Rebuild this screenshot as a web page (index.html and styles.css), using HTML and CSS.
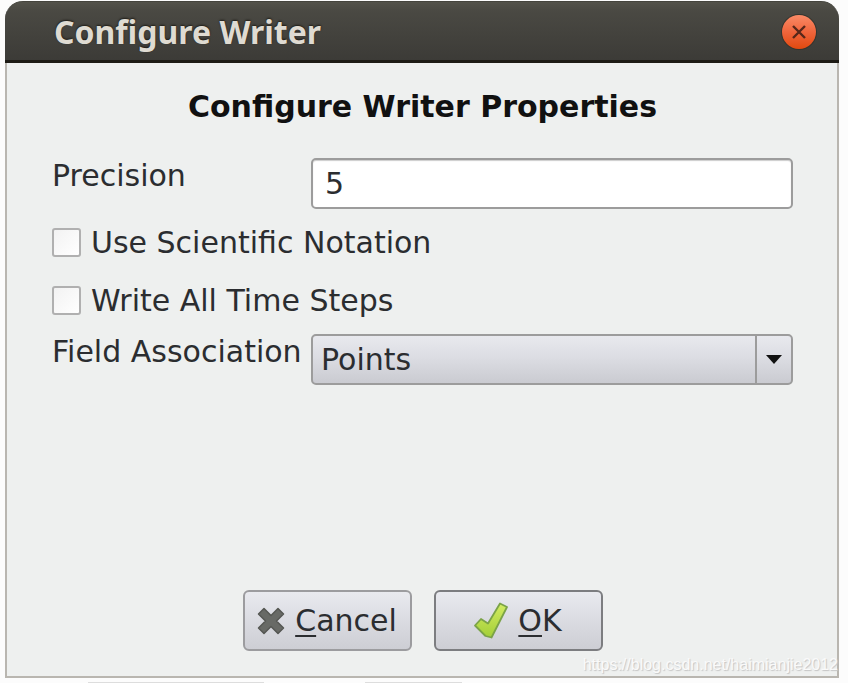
FILE: index.html
```
<!DOCTYPE html>
<html lang="en">

<head>
    <meta charset="utf-8">
    <title>Configure Writer</title>

    <link rel="stylesheet" href="styles.css">
</head>

<body>
    <form class="dialog">
        <div class="titlebar">
            <span class="titlebar-text">Configure Writer</span>
            <button type="button" class="close" aria-label="Close">
                <svg width="36" height="36" viewBox="0 0 36 36" aria-hidden="true">
                    <defs>
                        <linearGradient id="closeFill" x1="0" y1="0" x2="0" y2="1">
                            <stop offset="0" stop-color="#fa8a66"></stop>
                            <stop offset="0.5" stop-color="#f0653c"></stop>
                            <stop offset="1" stop-color="#e2490f"></stop>
                        </linearGradient>
                    </defs>
                    <circle cx="18" cy="18" r="18" fill="#35352f"></circle>
                    <circle cx="18" cy="18" r="17" fill="url(#closeFill)"></circle>
                    <path d="M12 12L24 24M24 12L12 24" stroke="#57271a" stroke-width="2.4"></path>
                </svg>
            </button>
        </div>

        <div class="content">
            <h1 class="heading">Configure Writer Properties</h1>

            <div class="fields">
                <label class="field-label" for="precision">Precision</label>
                <input class="text-input" type="text" id="precision" value="5">

                <div class="checks">
                    <label class="check"><input type="checkbox" class="check-box">Use Scientific Notation</label>
                    <label class="check"><input type="checkbox" class="check-box">Write All Time Steps</label>
                </div>

                <label class="field-label" for="association">Field Association</label>
                <div class="select-wrap">
                    <select class="select" id="association">
                        <option>Points</option>
                        <option>Cells</option>
                    </select>
                    <span class="select-arrow">
                        <svg width="16" height="9" viewBox="0 0 16 9" aria-hidden="true">
                            <path d="M0 0H16L8 9Z" fill="#111"></path>
                        </svg>
                    </span>
                </div>
            </div>

            <div class="buttons">
                <button type="button" class="button">
                    <svg width="28" height="28" viewBox="0 0 28 28" aria-hidden="true">
                        <path d="M7 1.5L14 8.5L21 1.5L26.5 7L19.5 14L26.5 21L21 26.5L14 19.5L7 26.5L1.5 21L8.5 14L1.5 7Z"
                            fill="#686a66" stroke="#555753" stroke-width="1.5" stroke-linejoin="round"></path>
                    </svg>
                    <span><span class="key">C</span>ancel</span>
                </button>
                <button type="submit" class="button button-default">
                    <svg width="34" height="37" viewBox="0 0 34 37" aria-hidden="true">
                        <defs>
                            <linearGradient id="okFill" x1="0" y1="0" x2="0" y2="1">
                                <stop offset="0" stop-color="#d3ec62"></stop>
                                <stop offset="1" stop-color="#a3cf38"></stop>
                            </linearGradient>
                        </defs>
                        <path d="M26 1.5L33 5L17.5 35.5L11.5 34L1 23.5L7 17L14 21.5Z" fill="url(#okFill)"
                            stroke="#7ba348" stroke-width="1.8" stroke-linejoin="round"></path>
                    </svg>
                    <span><span class="key">O</span>K</span>
                </button>
            </div>
        </div>

        <span class="watermark">https://blog.csdn.net/haimianjie2012</span>
    </form>

    <div class="page-lines">
        <span class="line line-long"></span>
        <span class="line line-short"></span>
    </div>
</body>

</html>
```

FILE: styles.css
```
* {
    box-sizing: border-box;
}

body {
    margin: 0;
    padding: 1px 9px 0 5px;
    min-height: 100vh;
    display: flex;
    flex-direction: column;
    background: #fcfcfc;
    font-family: "DejaVu Sans", sans-serif;
    font-size: 30px;
    color: #2b2d30;
}

/* Dialog window */
.dialog {
    position: relative;
    flex: 1;
    display: flex;
    flex-direction: column;
    background: #eef0ef;
    border-radius: 18px 18px 0 0;
}

.titlebar {
    display: flex;
    align-items: center;
    justify-content: space-between;
    height: 62px;
    padding: 2px 22px 0 49px;
    background: linear-gradient(#53524a, #4a4943 15%, #3c3b37);
    border-top: 1px solid #45443d;
    border-bottom: 3px solid #1d1b15;
    border-radius: 18px 18px 0 0;
}

.titlebar-text {
    font-family: "Noto Sans", "Open Sans", sans-serif;
    font-weight: bold;
    font-size: 32px;
    line-height: 44px;
    color: #dfdbd2;
    text-shadow: 0 -1px 2px #1d1b15;
}

.close {
    display: flex;
    padding: 0;
    border: none;
    border-radius: 50%;
    background: none;
}

.content {
    flex: 1;
    display: flex;
    flex-direction: column;
    padding: 26px 44px 25px 45px;
    border: 2px solid #b9b6b0;
    border-top: none;
}

.heading {
    margin: 0 0 33px;
    font-size: 30px;
    line-height: 36px;
    text-align: center;
    color: #111;
}

/* Form fields */
.fields {
    display: grid;
    grid-template-columns: 247px 1fr;
    gap: 19px 12px;
}

.field-label {
    line-height: 36px;
    white-space: nowrap;
}

.text-input,
.select {
    width: 100%;
    height: 51px;
    border: 2px solid #9c9c9c;
    border-radius: 5px;
    font: inherit;
    color: inherit;
}

.text-input {
    padding: 0 12px;
    background: #fff;
    box-shadow: inset 0 1px 1px #ccc;
}

.checks {
    grid-column: 1 / -1;
    display: flex;
    flex-direction: column;
    gap: 29px;
}

.check {
    display: flex;
    align-items: center;
    gap: 10px;
    line-height: 29px;
}

.check-box {
    appearance: none;
    width: 29px;
    height: 29px;
    margin: 0;
    border: 2px solid #b0b0b0;
    border-radius: 3px;
    background: linear-gradient(135deg, #f2f2f2, #fff);
}

.check-box:checked {
    background: #686a66;
}

.select-wrap {
    position: relative;
}

.select {
    appearance: none;
    padding: 0 48px 0 8px;
    background: linear-gradient(#e8e9ee, #dcdde3 45%, #cacbd1);
}

.select-arrow {
    position: absolute;
    top: 2px;
    right: 2px;
    bottom: 2px;
    width: 36px;
    display: flex;
    align-items: center;
    justify-content: center;
    border-left: 2px solid #9c9c9c;
    pointer-events: none;
}

/* Buttons */
.buttons {
    display: flex;
    justify-content: center;
    gap: 22px;
    margin-top: auto;
}

.button {
    display: flex;
    align-items: center;
    justify-content: center;
    gap: 10px;
    width: 169px;
    height: 61px;
    padding: 0;
    border: 2px solid #9c9c9f;
    border-radius: 6px;
    background: linear-gradient(#e9eaef, #dcdde3 45%, #cdced4);
    font: inherit;
    color: inherit;
}

.button-default {
    border-color: #7c7d80;
}

.key {
    text-decoration: underline;
    text-decoration-thickness: 2px;
    text-underline-offset: 4px;
}

.watermark {
    position: absolute;
    right: 1px;
    bottom: 4px;
    font-family: "Liberation Sans", Arial, sans-serif;
    font-size: 16px;
    line-height: 18px;
    color: #fafafa;
    text-shadow: 1px 1px 1px #c4c4c4;
}

.page-lines {
    display: flex;
    align-items: flex-end;
    gap: 101px;
    height: 5px;
    padding-left: 83px;
}

.line {
    height: 1px;
    background: #ddd;
}

.line-long {
    width: 176px;
}

.line-short {
    width: 97px;
}
```
